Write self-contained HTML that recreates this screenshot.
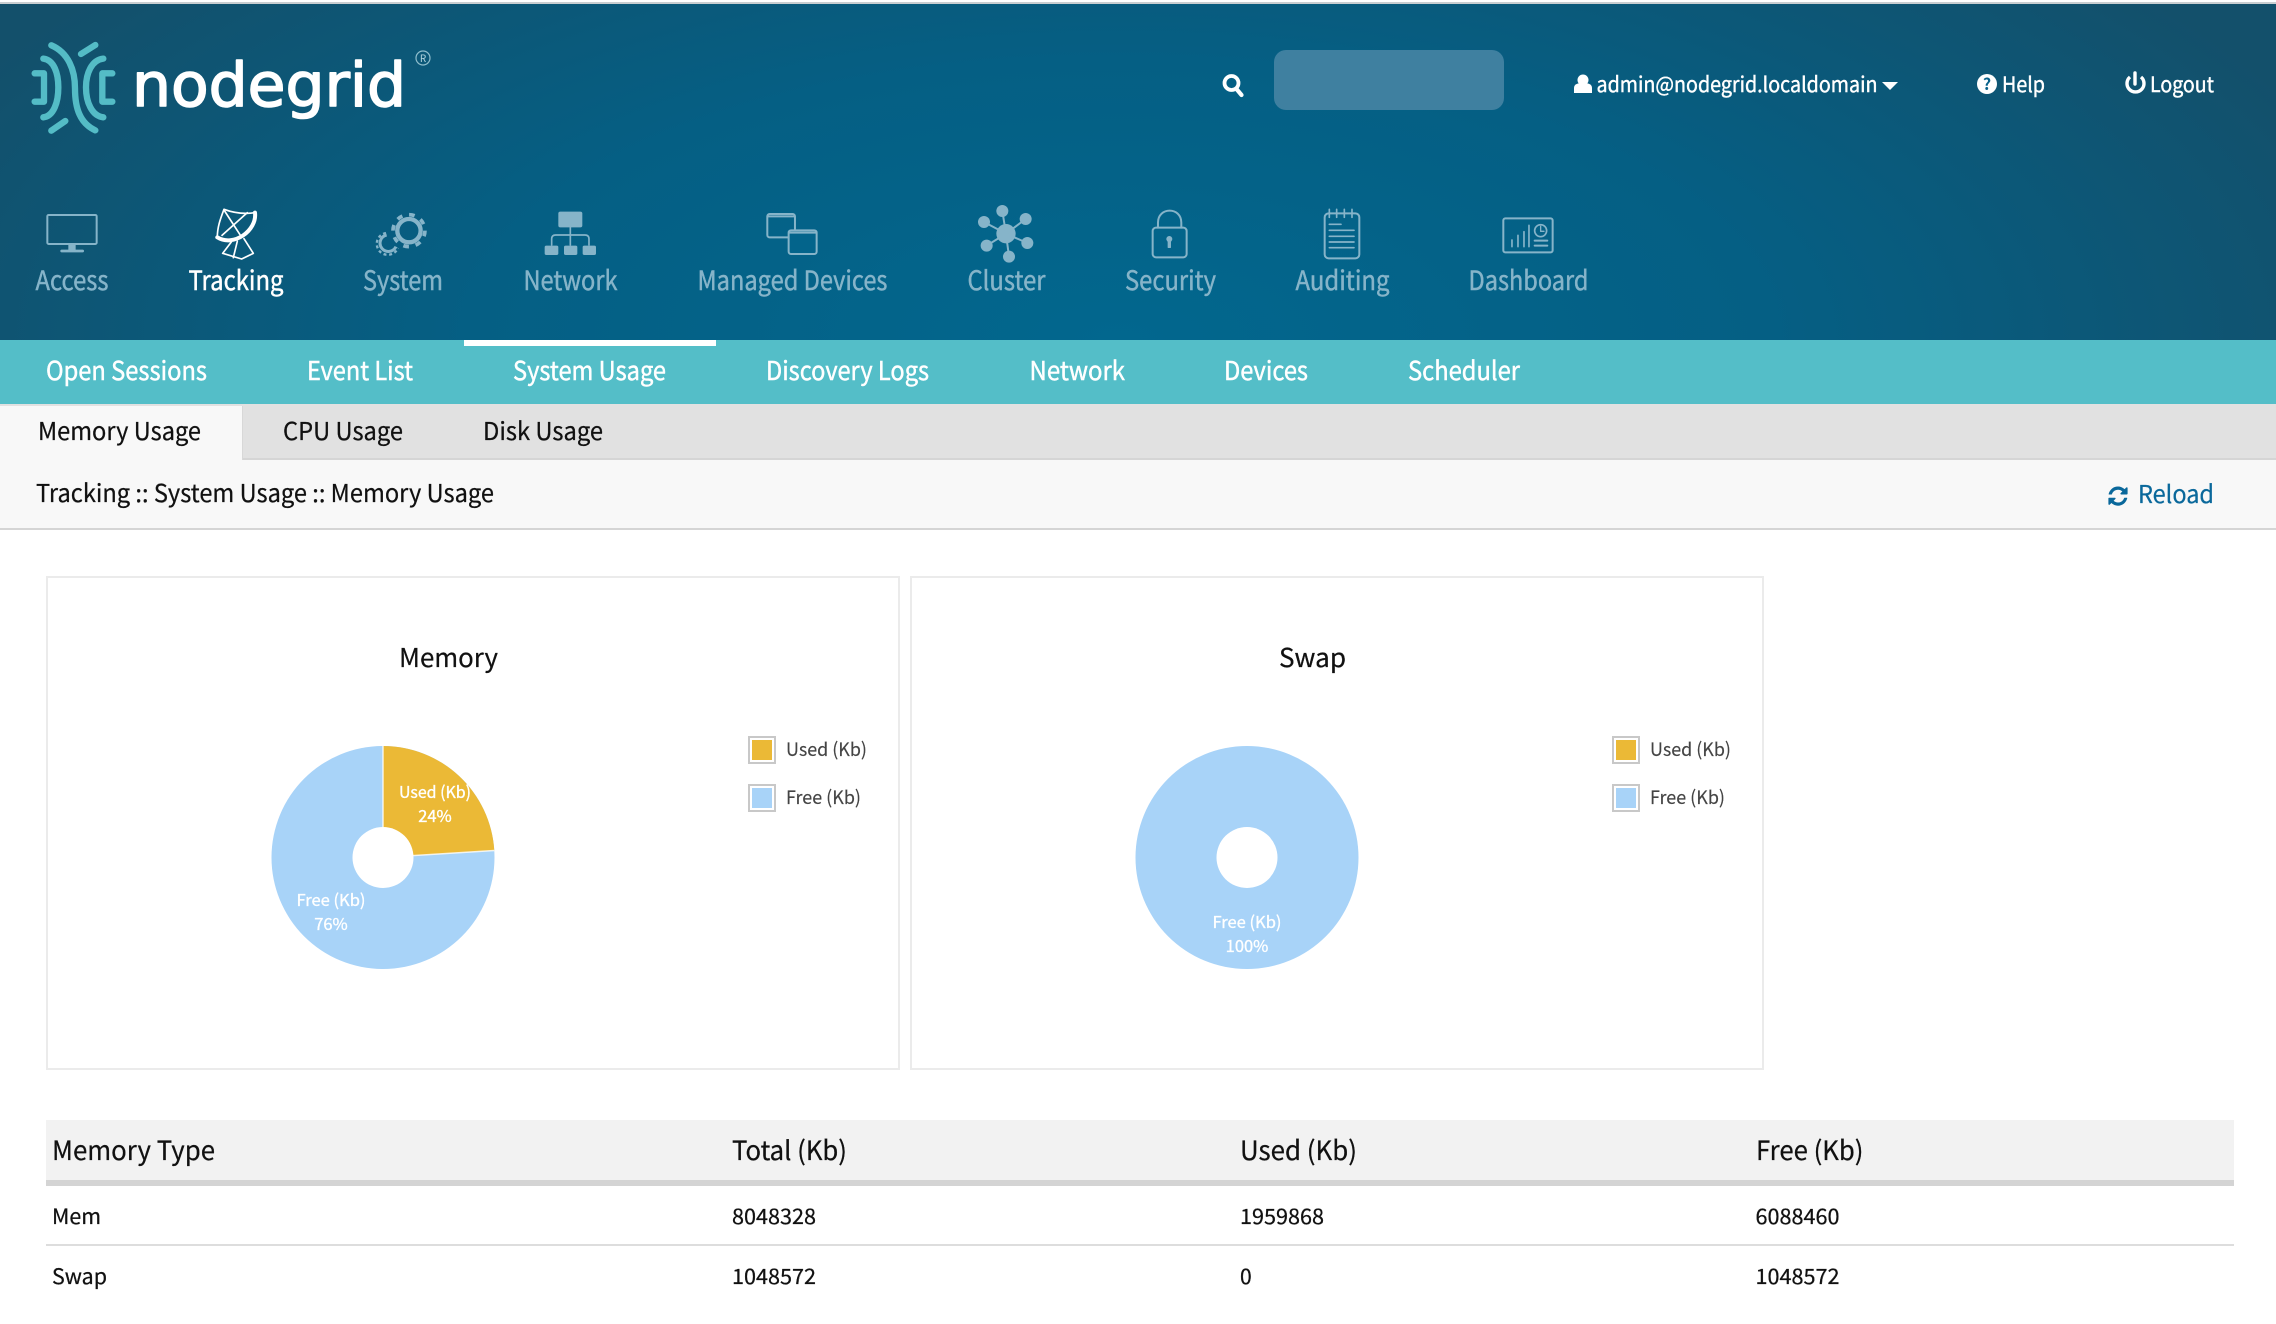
<!DOCTYPE html>
<html lang="en"><head><meta charset="utf-8"><title>Nodegrid - Tracking</title>
<style>
html,body{margin:0;padding:0;background:#fff;width:2276px;height:1324px;overflow:hidden}
svg{display:block}
text{font-family:"Noto Sans CJK JP","Liberation Sans",sans-serif;}
.nav text{font-size:26.5px;fill:#86b4c9;stroke:#86b4c9;stroke-width:.45}
.nav text.on{fill:#fff;stroke:#fff}
.sub text{font-size:26px;fill:#fff;stroke:#fff;stroke-width:.45}
.tabs text{font-size:24.5px;fill:#111;stroke:#111;stroke-width:.25}
.ic{fill:none;stroke:#86b4c9;stroke-width:6;stroke-linecap:round;stroke-linejoin:round}
.icf{fill:#86b4c9;stroke:none}
.top text{font-size:21px;fill:#fff;stroke:#fff;stroke-width:.4}
.lg text{font-size:18.5px;fill:#444;stroke:#444;stroke-width:.15}
.pl text{font-size:16.5px;fill:#fff;stroke:#fff;stroke-width:.35;text-anchor:middle}
.th text{font-size:26.5px;fill:#111;stroke:#111;stroke-width:.25}
.td text{font-size:21px;fill:#111;stroke:#111;stroke-width:.25}
.ttl{font-size:26px;fill:#111;stroke:#111;stroke-width:.25}
</style></head>
<body>
<svg xmlns="http://www.w3.org/2000/svg" width="2276" height="1324" viewBox="0 0 2276 1324">
<defs>
<radialGradient id="hg" gradientUnits="userSpaceOnUse" cx="0" cy="0" r="1" gradientTransform="translate(1120 340) scale(1300 560)">
<stop offset="0" stop-color="#02678e"/><stop offset=".5" stop-color="#055f84"/><stop offset="1" stop-color="#13506b"/>
</radialGradient>
</defs>
<rect width="2276" height="1324" fill="#fff"/>
<rect y="2" width="2276" height="2" fill="#c9ced1"/>
<rect y="4" width="2276" height="336" fill="url(#hg)"/>

<!-- logo -->
<g transform="translate(20 30) scale(.3333)">
<g fill="none" stroke="#54bcc6" stroke-width="19" stroke-linecap="round" stroke-linejoin="round">
<path d="M44 130H72V215H44"/>
<path d="M70 86C102 90 115 130 115 172C115 215 102 258 70 262"/>
<path d="M94 46C145 68 165 120 165 175C165 235 180 280 226 301"/>
<path d="M183 72L226 45"/>
<path d="M94 302L136 273"/>
<path d="M250 86C215 90 198 130 198 172C198 215 215 258 250 262"/>
<path d="M277 130H247V215H277"/>
</g>
</g>
<text x="132" y="106" font-size="61" textLength="274" lengthAdjust="spacingAndGlyphs" style="font-family:'DejaVu Sans',sans-serif;fill:#fff;stroke:#fff;stroke-width:1.6;stroke-linejoin:round">nodegrid</text>
<circle cx="423" cy="58" r="7" fill="none" stroke="#8fbecd" stroke-width="1.2"/>
<text x="423" y="62" font-size="10" text-anchor="middle" style="fill:#b5d6e0">R</text>

<!-- top right -->
<g class="top">
<circle cx="1231.500" cy="83" r="7" fill="none" stroke="#fff" stroke-width="3.800"/>
<path d="M1236.500 89L1241.500 95" stroke="#fff" stroke-width="4.200" stroke-linecap="round"/>
<rect x="1274" y="50" width="230" height="60" rx="12" fill="#3f80a0"/>
<circle cx="1583" cy="80" r="5.500" fill="#fff"/>
<path d="M1574 93V88C1574 84 1578 83 1583 83C1588 83 1592 84 1592 88V93Z" fill="#fff"/>
<text x="1596.500" y="92" textLength="281" lengthAdjust="spacingAndGlyphs">admin@nodegrid.localdomain</text>
<path d="M1882 82H1898L1890 90Z" fill="#fff"/>
<circle cx="1987" cy="84" r="10" fill="#fff"/>
<text x="1987" y="90" text-anchor="middle" style="font-size:16px;font-weight:700;fill:#07618a;stroke:none">?</text>
<text x="2002" y="92" textLength="43" lengthAdjust="spacingAndGlyphs">Help</text>
<path d="M2130 77A8.500 8.500 0 1 0 2141 77" fill="none" stroke="#fff" stroke-width="3.400"/>
<path d="M2135 73V84" stroke="#fff" stroke-width="3.400" stroke-linecap="round"/>
<text x="2150" y="92" textLength="64" lengthAdjust="spacingAndGlyphs">Logout</text>
</g>

<!-- main nav icons -->
<g class="nav">
<g transform="translate(20 190) scale(.3333)">
<g class="ic">
<rect x="82" y="75" width="148" height="87" rx="4"/>
<path d="M125 183H188" stroke-width="8"/>
</g>
<rect class="icf" x="145" y="162" width="22" height="20"/>
<g fill="none" stroke="#fff" stroke-width="5" stroke-linejoin="round" stroke-linecap="round">
<path d="M592 142C640 172 712 122 705 68" stroke-width="12"/>
<path d="M592 142C592 110 602 85 612 58C650 72 680 72 705 68"/>
<path d="M612 60L664 140"/>
<path d="M682 68L606 136"/>
<path d="M634 156L608 190L665 207L700 190L672 146"/>
<path d="M652 154L640 203"/>
</g>
<g fill="none" stroke="#86b4c9">
<circle cx="1167" cy="122" r="35" stroke-width="13"/>
<circle cx="1167" cy="122" r="48" stroke-width="11" stroke-dasharray="17 20.700"/>
<path d="M1100 135A25 25 0 1 0 1128 170" stroke-width="9"/>
<path d="M1098 129A33 33 0 1 0 1134 174" stroke-width="7" stroke-dasharray="9 8"/>
</g>
</g>
<g transform="translate(500 190) scale(.3333)">
<g class="icf">
<rect x="175" y="65" width="72" height="47" rx="6"/>
<rect x="134" y="167" width="41" height="28" rx="5"/>
<rect x="192" y="167" width="40" height="28" rx="5"/>
<rect x="248" y="167" width="40" height="28" rx="5"/>
</g>
<g class="ic" stroke-width="5">
<path d="M211 112V165" style="stroke-width:5"/>
<path d="M155 165V147Q155 135 167 135H255Q267 135 267 147V165" style="stroke-width:5"/>
<rect x="802" y="72" width="83" height="70" rx="7" style="stroke-width:6"/>
<path d="M803 79H884" style="stroke-width:6"/>
</g>
<rect x="866" y="121" width="84" height="71" rx="7" fill="#03648b" stroke="#86b4c9" stroke-width="6"/>
<path d="M867 128H949" stroke="#86b4c9" stroke-width="6"/>
</g>
<g transform="translate(940 190) scale(.3333)">
<g class="icf">
<circle cx="198" cy="131" r="29"/>
<circle cx="187" cy="63" r="18"/><circle cx="132" cy="96" r="18"/><circle cx="257" cy="87" r="18"/>
<circle cx="140" cy="167" r="18"/><circle cx="262" cy="159" r="18"/><circle cx="207" cy="200" r="18"/>
</g>
<path d="M198 131L187 63M198 131L132 96M198 131L257 87M198 131L140 167M198 131L262 159M198 131L207 200" stroke="#86b4c9" stroke-width="6"/>
<g class="ic">
<rect x="638" y="113" width="102" height="89" rx="10"/>
<path d="M654 113V98C654 50 724 50 724 98V113"/>
</g>
<circle class="icf" cx="688" cy="147" r="9"/>
<rect class="icf" x="683" y="150" width="10" height="24" rx="2"/>
</g>
<g transform="translate(1280 190) scale(.3333)">
<g class="ic">
<rect x="134" y="70" width="104" height="135" rx="12"/>
<path d="M148 58V82M170 58V82M193 58V82M216 58V82" style="stroke-width:5"/>
<path d="M148 103H183M148 121H222M148 139H222M148 156H222M148 173H222" style="stroke-width:5"/>
<rect x="670" y="85" width="148" height="102" rx="6"/>
<path d="M696 150V170M714 136V170M732 125V170M747 106V170" style="stroke-width:5"/>
<circle cx="782" cy="122" r="18" style="stroke-width:5"/>
<path d="M782 109V124H792" style="stroke-width:4"/>
<path d="M764 152H802M764 167H802"/>
</g>
</g>
<text x="35.500" y="290" textLength="73" lengthAdjust="spacingAndGlyphs">Access</text>
<text class="on" x="188.500" y="290" textLength="95" lengthAdjust="spacingAndGlyphs">Tracking</text>
<text x="363" y="290" textLength="80" lengthAdjust="spacingAndGlyphs">System</text>
<text x="523.500" y="290" textLength="94" lengthAdjust="spacingAndGlyphs">Network</text>
<text x="697.500" y="290" textLength="190" lengthAdjust="spacingAndGlyphs">Managed Devices</text>
<text x="967.500" y="290" textLength="78" lengthAdjust="spacingAndGlyphs">Cluster</text>
<text x="1125" y="290" textLength="91" lengthAdjust="spacingAndGlyphs">Security</text>
<text x="1295.500" y="290" textLength="94" lengthAdjust="spacingAndGlyphs">Auditing</text>
<text x="1468.500" y="290" textLength="120" lengthAdjust="spacingAndGlyphs">Dashboard</text>
</g>

<!-- sub nav -->
<g class="sub">
<rect y="340" width="2276" height="64" fill="#54bec8"/>
<rect x="464" y="340" width="252" height="6" fill="#fff"/>
<text x="46" y="380" textLength="161" lengthAdjust="spacingAndGlyphs">Open Sessions</text>
<text x="307" y="380" textLength="106" lengthAdjust="spacingAndGlyphs">Event List</text>
<text x="513" y="380" textLength="153" lengthAdjust="spacingAndGlyphs">System Usage</text>
<text x="766" y="380" textLength="163" lengthAdjust="spacingAndGlyphs">Discovery Logs</text>
<text x="1029.500" y="380" textLength="95.500" lengthAdjust="spacingAndGlyphs">Network</text>
<text x="1224" y="380" textLength="84" lengthAdjust="spacingAndGlyphs">Devices</text>
<text x="1408" y="380" textLength="112" lengthAdjust="spacingAndGlyphs">Scheduler</text>
</g>

<!-- tabs -->
<g class="tabs">
<rect y="404" width="2276" height="54" fill="#e1e1e1"/>
<rect y="458" width="2276" height="2" fill="#d5d5d5"/>
<rect y="460" width="2276" height="68" fill="#f8f8f8"/>
<rect y="528" width="2276" height="2" fill="#d5d5d5"/>
<rect y="406" width="242" height="54" fill="#f8f8f8"/>
<rect x="242" y="406" width="1" height="54" fill="#d8d8d8"/>
<text x="38" y="440" textLength="163" lengthAdjust="spacingAndGlyphs">Memory Usage</text>
<text x="283" y="440" textLength="120" lengthAdjust="spacingAndGlyphs">CPU Usage</text>
<text x="483" y="440" textLength="120" lengthAdjust="spacingAndGlyphs">Disk Usage</text>
<text x="36" y="502" textLength="458" lengthAdjust="spacingAndGlyphs">Tracking :: System Usage :: Memory Usage</text>
<path transform="translate(2106.800 484.900) scale(.0125)" fill="#0a689b" d="M1639 1056q0 5-1 7-64 268-268 434.500t-478 166.500q-146 0-282.500-55t-243.500-157l-129 129q-19 19-45 19t-45-19-19-45v-448q0-26 19-45t45-19h448q26 0 45 19t19 45-19 45l-137 137q71 66 161 102t187 36q134 0 250-65t186-179q11-17 53-117 8-23 30-23h192q13 0 22.500 9.500t9.500 22.500zm25-800v448q0 26-19 45t-45 19h-448q-26 0-45-19t-19-45 19-45l138-138q-148-137-349-137-134 0-250 65t-186 179q-11 17-53 117-8 23-30 23h-199q-13 0-22.500-9.500t-9.500-22.500v-7q65-268 270-434.500t480-166.500q146 0 284 55.500t245 156.500l130-129q19-19 45-19t45 19 19 45z"/>
<text x="2138" y="503" textLength="76" lengthAdjust="spacingAndGlyphs" style="fill:#0a689b;stroke:#0a689b">Reload</text>
</g>

<!-- cards -->
<rect x="47" y="577" width="852" height="492" fill="#fff" stroke="#ebebeb" stroke-width="2"/>
<rect x="911" y="577" width="852" height="492" fill="#fff" stroke="#ebebeb" stroke-width="2"/>
<text class="ttl" x="399" y="667" textLength="99" lengthAdjust="spacingAndGlyphs">Memory</text>
<text class="ttl" x="1279" y="667" textLength="67" lengthAdjust="spacingAndGlyphs">Swap</text>

<!-- memory pie -->
<circle cx="383" cy="857.500" r="111.500" fill="#a8d3f8"/>
<path d="M383 857.500V746A111.500 111.500 0 0 1 494.300 850.500Z" fill="#ebb936"/>
<path d="M383 746V857.500L494.300 850.500" fill="none" stroke="#fff" stroke-width="1.500" opacity=".8"/>
<circle cx="383" cy="857.500" r="30.500" fill="#fff"/>
<g class="pl">
<text x="399" y="798" textLength="72" lengthAdjust="spacingAndGlyphs" style="text-anchor:start">Used (Kb)</text>
<text x="435" y="822">24%</text>
<text x="331" y="906">Free (Kb)</text>
<text x="331" y="930">76%</text>
</g>
<!-- swap pie -->
<circle cx="1247" cy="857.500" r="111.500" fill="#a8d3f8"/>
<circle cx="1247" cy="857.500" r="30.500" fill="#fff"/>
<g class="pl">
<text x="1247" y="928">Free (Kb)</text>
<text x="1247" y="952">100%</text>
</g>

<!-- legends -->
<g class="lg">
<rect x="749" y="737" width="26" height="26" fill="#fff" stroke="#c8c8c8" stroke-width="2"/>
<rect x="752" y="740" width="20" height="20" fill="#ebb936"/>
<rect x="749" y="785" width="26" height="26" fill="#fff" stroke="#c8c8c8" stroke-width="2"/>
<rect x="752" y="788" width="20" height="20" fill="#a8d3f8"/>
<text x="786" y="756" textLength="81" lengthAdjust="spacingAndGlyphs">Used (Kb)</text>
<text x="786" y="804" textLength="75" lengthAdjust="spacingAndGlyphs">Free (Kb)</text>
<rect x="1613" y="737" width="26" height="26" fill="#fff" stroke="#c8c8c8" stroke-width="2"/>
<rect x="1616" y="740" width="20" height="20" fill="#ebb936"/>
<rect x="1613" y="785" width="26" height="26" fill="#fff" stroke="#c8c8c8" stroke-width="2"/>
<rect x="1616" y="788" width="20" height="20" fill="#a8d3f8"/>
<text x="1650" y="756" textLength="81" lengthAdjust="spacingAndGlyphs">Used (Kb)</text>
<text x="1650" y="804" textLength="75" lengthAdjust="spacingAndGlyphs">Free (Kb)</text>
</g>

<!-- table -->
<g class="th">
<rect x="46" y="1120" width="2188" height="60" fill="#f2f2f2"/>
<rect x="46" y="1180" width="2188" height="6" fill="#d4d4d4"/>
<text x="52" y="1160" textLength="163" lengthAdjust="spacingAndGlyphs">Memory Type</text>
<text x="732" y="1160" textLength="115" lengthAdjust="spacingAndGlyphs">Total (Kb)</text>
<text x="1240" y="1160" textLength="117" lengthAdjust="spacingAndGlyphs">Used (Kb)</text>
<text x="1756" y="1160" textLength="107.500" lengthAdjust="spacingAndGlyphs">Free (Kb)</text>
</g>
<g class="td">
<rect x="46" y="1244" width="2188" height="2" fill="#ddd"/>
<text x="52" y="1224" textLength="49" lengthAdjust="spacingAndGlyphs">Mem</text>
<text x="732" y="1224" textLength="84" lengthAdjust="spacingAndGlyphs">8048328</text>
<text x="1240" y="1224" textLength="84" lengthAdjust="spacingAndGlyphs">1959868</text>
<text x="1755.500" y="1224" textLength="84" lengthAdjust="spacingAndGlyphs">6088460</text>
<text x="52" y="1284" textLength="55" lengthAdjust="spacingAndGlyphs">Swap</text>
<text x="732" y="1284" textLength="84" lengthAdjust="spacingAndGlyphs">1048572</text>
<text x="1240" y="1284">0</text>
<text x="1755.500" y="1284" textLength="84" lengthAdjust="spacingAndGlyphs">1048572</text>
</g>
</svg>
</body></html>
